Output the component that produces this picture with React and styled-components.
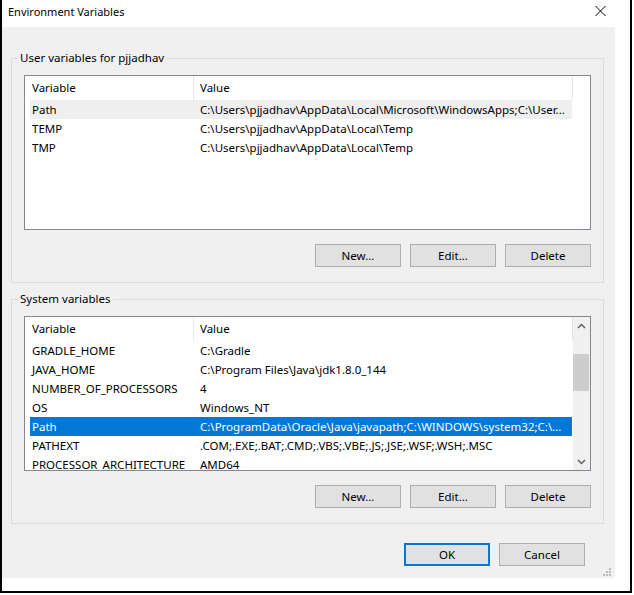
import React from 'react';
import styled, { createGlobalStyle } from 'styled-components';

const GlobalStyle = createGlobalStyle`
  html, body {
    margin: 0;
    padding: 0;
    background: #fff;
  }
  body {
    font-family: "Segoe UI", "Noto Sans", sans-serif;
    font-size: 11.5px;
    color: #000;
  }
  * {
    box-sizing: border-box;
  }
`;

const Frame = styled.div`
  width: 632px;
  height: 593px;
  border: 2px solid #000;
  border-top: none;
  background: #fff;
  display: flex;
  flex-direction: column;
`;

const TitleBar = styled.div`
  height: 27px;
  flex-shrink: 0;
  display: flex;
  align-items: flex-start;
  justify-content: space-between;
  padding: 4px 24px 0 6px;
  line-height: 16px;
  font-size: 11px;
`;

const CloseIcon = styled.svg`
  margin-top: 2px;
  display: block;
`;

const Body = styled.div`
  flex: 1;
  display: flex;
  padding: 0 15px 13px 0;
`;

const Client = styled.div`
  position: relative;
  flex: 1;
  background: #f0f0f0;
  padding: 23px 11px 0 9px;
  display: flex;
  flex-direction: column;
`;

const Group = styled.fieldset`
  margin: ${p => (p.$first ? '0' : '8px')} 0 0;
  padding: 0 12px 15px;
  border: 1px solid #dcdcdc;
  min-width: 0;
`;

const GroupLabel = styled.legend`
  padding: 0 2px;
  margin-left: -6px;
  line-height: 16px;
`;

const List = styled.div`
  margin-top: 9px;
  height: 155px;
  background: #fff;
  border: 1px solid #828790;
  display: flex;
  overflow: hidden;
`;

const ListBody = styled.div`
  width: 548px;
  flex-shrink: 0;
  overflow: hidden;
`;

const HeaderRow = styled.div`
  display: flex;
  height: 24px;
  line-height: 24px;
`;

const HeaderCell = styled.div`
  width: ${p => p.$w}px;
  padding-left: ${p => p.$pad}px;
  border-right: 1px solid #e5e5e5;
  white-space: nowrap;
`;

const rowBg = { selected: '#0078d7', inactive: '#efefef' };

const Row = styled.div`
  display: flex;
  height: 19px;
  line-height: 19px;
  margin-left: 5px;
  width: 542px;
  background: ${p => rowBg[p.$state] || 'transparent'};
  color: ${p => (p.$state === 'selected' ? '#fff' : '#000')};
`;

const NameCell = styled.div`
  width: 164px;
  flex-shrink: 0;
  padding-left: 2px;
  white-space: nowrap;
  overflow: hidden;
`;

const ValueCell = styled.div`
  flex: 1;
  min-width: 0;
  padding-left: 6px;
  white-space: nowrap;
  overflow: hidden;
  text-overflow: ellipsis;
`;

const ScrollBar = styled.div`
  width: 17px;
  background: #f0f0f0;
  display: flex;
  flex-direction: column;
`;

const ScrollArrow = styled.div`
  height: 17px;
  flex-shrink: 0;
  display: flex;
  align-items: center;
  justify-content: center;
`;

const Thumb = styled.div`
  margin: 20px 1px 0 0;
  height: 37px;
  background: #cdcdcd;
`;

const Track = styled.div`
  flex: 1;
`;

const ButtonRow = styled.div`
  display: flex;
  justify-content: flex-end;
  gap: 9px;
  margin-top: ${p => p.$top || 14}px;
  padding-right: ${p => p.$right || 0}px;
`;

const Button = styled.button`
  width: 86px;
  height: 23px;
  padding: 0;
  background: #e1e1e1;
  border: ${p => (p.$default ? '2px solid #0078d7' : '1px solid #adadad')};
  font-family: inherit;
  font-size: 11.5px;
  color: #000;
`;

const Grip = styled.svg`
  position: absolute;
  right: 3px;
  bottom: 1px;
`;

const userVars = [
  { name: 'Path', value: String.raw`C:\Users\pjjadhav\AppData\Local\Microsoft\WindowsApps;C:\User...`, state: 'inactive' },
  { name: 'TEMP', value: String.raw`C:\Users\pjjadhav\AppData\Local\Temp` },
  { name: 'TMP', value: String.raw`C:\Users\pjjadhav\AppData\Local\Temp` },
];

const systemVars = [
  { name: 'GRADLE_HOME', value: String.raw`C:\Gradle` },
  { name: 'JAVA_HOME', value: String.raw`C:\Program Files\Java\jdk1.8.0_144` },
  { name: 'NUMBER_OF_PROCESSORS', value: '4' },
  { name: 'OS', value: 'Windows_NT' },
  { name: 'Path', value: String.raw`C:\ProgramData\Oracle\Java\javapath;C:\WINDOWS\system32;C:\...`, state: 'selected' },
  { name: 'PATHEXT', value: '.COM;.EXE;.BAT;.CMD;.VBS;.VBE;.JS;.JSE;.WSF;.WSH;.MSC' },
  { name: 'PROCESSOR_ARCHITECTURE', value: 'AMD64' },
];

function Chevron({ up }) {
  return (
    <svg width="9" height="6" viewBox="0 0 9 6">
      <polyline
        points={up ? '1,5 4.5,1.5 8,5' : '1,1 4.5,4.5 8,1'}
        fill="none"
        stroke="#606060"
        strokeWidth="1.5"
      />
    </svg>
  );
}

function VarList({ rows, scroll }) {
  return (
    <List>
      <ListBody>
        <HeaderRow>
          <HeaderCell $w={169} $pad={7}>Variable</HeaderCell>
          <HeaderCell $w={379} $pad={6}>Value</HeaderCell>
        </HeaderRow>
        {rows.map(r => (
          <Row key={r.name} $state={r.state}>
            <NameCell>{r.name}</NameCell>
            <ValueCell>{r.value}</ValueCell>
          </Row>
        ))}
      </ListBody>
      {scroll && (
        <ScrollBar>
          <ScrollArrow><Chevron up /></ScrollArrow>
          <Thumb />
          <Track />
          <ScrollArrow><Chevron /></ScrollArrow>
        </ScrollBar>
      )}
    </List>
  );
}

function VarGroup({ title, rows, scroll, first }) {
  return (
    <Group $first={first}>
      <GroupLabel>{title}</GroupLabel>
      <VarList rows={rows} scroll={scroll} />
      <ButtonRow>
        <Button>New...</Button>
        <Button>Edit...</Button>
        <Button>Delete</Button>
      </ButtonRow>
    </Group>
  );
}

export default function App() {
  return (
    <>
      <GlobalStyle />
      <Frame>
        <TitleBar>
          <span>Environment Variables</span>
          <CloseIcon width="11" height="10" viewBox="0 0 11 10">
            <path d="M0.5 0 L10.5 10 M10.5 0 L0.5 10" stroke="#000" strokeWidth="1" fill="none" />
          </CloseIcon>
        </TitleBar>
        <Body>
          <Client>
            <VarGroup title="User variables for pjjadhav" rows={userVars} first />
            <VarGroup title="System variables" rows={systemVars} scroll />
            <ButtonRow $top={19} $right={19}>
              <Button $default>OK</Button>
              <Button>Cancel</Button>
            </ButtonRow>
            <Grip width="9" height="9" viewBox="0 0 9 9">
              <g fill="#bcbcbc">
                <rect x="6" y="0" width="2" height="2" />
                <rect x="3" y="3" width="2" height="2" />
                <rect x="6" y="3" width="2" height="2" />
                <rect x="0" y="6" width="2" height="2" />
                <rect x="3" y="6" width="2" height="2" />
                <rect x="6" y="6" width="2" height="2" />
              </g>
            </Grip>
          </Client>
        </Body>
      </Frame>
    </>
  );
}
